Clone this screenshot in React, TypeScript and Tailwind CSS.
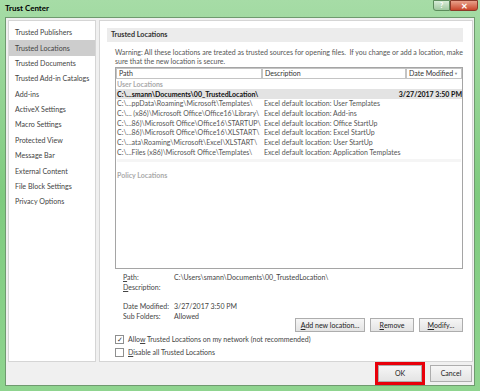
import React from "react";

const sideItems = [
  "Trusted Publishers",
  "Trusted Locations",
  "Trusted Documents",
  "Trusted Add-in Catalogs",
  "Add-ins",
  "ActiveX Settings",
  "Macro Settings",
  "Protected View",
  "Message Bar",
  "External Content",
  "File Block Settings",
  "Privacy Options",
];

const rows = [
  ["C:\\...ppData\\Roaming\\Microsoft\\Templates\\", "Excel default location: User Templates"],
  ["C:\\... (x86)\\Microsoft Office\\Office16\\Library\\", "Excel default location: Add-ins"],
  ["C:\\...86)\\Microsoft Office\\Office16\\STARTUP\\", "Excel default location: Office StartUp"],
  ["C:\\...86)\\Microsoft Office\\Office16\\XLSTART\\", "Excel default location: Excel StartUp"],
  ["C:\\...ata\\Roaming\\Microsoft\\Excel\\XLSTART\\", "Excel default location: User StartUp"],
  ["C:\\...Files (x86)\\Microsoft Office\\Templates\\", "Excel default location: Application Templates"],
];

const Btn = ({ children, className = "" }: { children: React.ReactNode; className?: string }) => (
  <div
    className={`h-[14px] flex items-center justify-center border border-[#adadad] bg-gradient-to-b from-[#f6f6f6] to-[#e4e4e4] text-[#222] whitespace-nowrap ${className}`}
  >
    {children}
  </div>
);

export default function App() {
  return (
    <div
      className="w-[480px] h-[391px] overflow-hidden flex flex-col bg-gradient-to-b from-[#a6dca6] via-[#7fcb7f] to-[#8fd48f] text-[7px] leading-none text-[#333] whitespace-nowrap"
      style={{ fontFamily: 'Lato, "Noto Sans", sans-serif' }}
    >
      {/* title bar */}
      <div className="h-[17px] flex items-start shrink-0">
        <div className="pl-[5px] pt-[4px] text-[8px] font-bold text-black">Trust Center</div>
        <div className="ml-auto mr-[2px] flex">
          <div className="w-[17px] h-[11px] border border-[#5c8c5c] rounded-bl-[3px] bg-gradient-to-b from-[#d8ecd8] to-[#9fc89f] text-[7px] font-bold text-white flex items-center justify-center">
            ?
          </div>
          <div className="w-[28px] h-[11px] border border-[#8a3a2a] rounded-br-[3px] bg-gradient-to-b from-[#e8a08a] to-[#c8442a] text-[8px] font-bold text-white flex items-center justify-center">
            ✕
          </div>
        </div>
      </div>

      {/* client area */}
      <div className="mx-[5px] h-[369px] bg-[#f0f0f0] border border-[#6f9a6f] flex flex-col">
        <div className="flex gap-[3px] pl-[2px] pr-[1px] pt-[2px] h-[348px]">
          {/* sidebar */}
          <div className="w-[88px] shrink-0 h-full bg-white border border-[#d5d5d5] pt-[4px] overflow-hidden">
            {sideItems.map((s) => (
              <div
                key={s}
                className={`h-[15.4px] flex items-center pl-[6px] text-[7.1px] text-[#444] ${
                  s === "Trusted Locations" ? "bg-[#cdcdcd] text-[#222]" : ""
                }`}
              >
                {s}
              </div>
            ))}
          </div>

          {/* main panel */}
          <div className="flex-1 min-w-0 h-full bg-white border border-[#d5d5d5] pl-[7px] pr-[9px] pt-[7px] flex flex-col overflow-hidden">
            <div className="h-[14px] bg-[#ececec] flex items-center pl-[4px] font-bold text-[7.2px] text-[#333]">
              Trusted Locations
            </div>
            <div className="pl-[8px] pt-[6px] text-[#555] leading-[9px]">
              <div>Warning: All these locations are treated as trusted sources for opening files.&nbsp; If you change or add a location, make</div>
              <div>sure that the new location is secure.</div>
            </div>

            {/* table */}
            <div className="ml-[8px] mt-[1px] h-[202px] border border-[#a5a5a5] flex flex-col overflow-hidden">
              <div className="flex h-[11px] text-[#333]">
                <div className="w-[146px] border border-[#c4c4c4] pl-[2px] flex items-center">Path</div>
                <div className="w-[144px] border border-[#c4c4c4] pl-[2px] flex items-center">Description</div>
                <div className="flex-1 border border-[#c4c4c4] pl-[2px] flex items-center justify-between pr-[3px]">
                  <span>Date Modified</span>
                  <span className="text-[4px] text-[#888]">▼</span>
                </div>
              </div>
              <div className="h-[9px] mt-[1px] pl-[1px] flex items-center text-[#aaa] font-bold">User Locations</div>
              <div className="h-[10px] bg-[#e3e3e3] flex items-center text-[#111] font-bold">
                <div className="w-[291px] pl-[1px]">C:\...smann\Documents\00_TrustedLocation\</div>
                <div className="pl-[1px]">3/27/2017 3:50 PM</div>
              </div>
              {rows.map(([p, d]) => (
                <div key={p} className="h-[9.7px] flex items-center text-[#555]">
                  <div className="w-[146px] pl-[1px]">{p}</div>
                  <div className="pl-[2px]">{d}</div>
                </div>
              ))}
              <div className="h-[3px] mt-[2px] mx-[1px] bg-[#f5f5f5]" />
              <div className="h-[9px] mt-[9px] pl-[1px] flex items-center text-[#aaa] font-bold">Policy Locations</div>
            </div>

            {/* details */}
            <div className="pl-[16px] pt-[3px] text-[#444]">
              <div className="flex h-[10px] items-center">
                <div className="w-[51px]"><u>P</u>ath:</div>
                <div>C:\Users\smann\Documents\00_TrustedLocation\</div>
              </div>
              <div className="flex h-[10px] items-center">
                <div className="w-[51px]"><u>D</u>escription:</div>
              </div>
              <div className="flex h-[10px] items-center mt-[9px]">
                <div className="w-[51px]">Date Modified:</div>
                <div>3/27/2017 3:50 PM</div>
              </div>
              <div className="flex h-[10px] items-center">
                <div className="w-[51px]">Sub Folders:</div>
                <div>Allowed</div>
              </div>
            </div>

            <div className="flex justify-end gap-[5px] mt-[-3px]">
              <Btn className="w-[70px]"><u>A</u>dd new location...</Btn>
              <Btn className="w-[44px]"><u>R</u>emove</Btn>
              <Btn className="w-[44px]"><u>M</u>odify...</Btn>
            </div>

            <div className="pl-[8px] mt-[1px] text-[#444]">
              <div className="flex items-center h-[13px] gap-[4px]">
                <div className="w-[9px] h-[9px] border border-[#8e8f8f] bg-white flex items-center justify-center text-[7px] text-[#333]">✓</div>
                <div>Allo<u>w</u> Trusted Locations on my network (not recommended)</div>
              </div>
              <div className="flex items-center h-[13px] gap-[4px]">
                <div className="w-[9px] h-[9px] border border-[#8e8f8f] bg-white" />
                <div><u>D</u>isable all Trusted Locations</div>
              </div>
            </div>
          </div>
        </div>

        {/* bottom bar */}
        <div className="flex-1 flex items-center justify-end gap-[5px] pr-[2px]">
          <div className="border-[3px] border-[#e8000a] p-0">
            <Btn className="w-[44px] h-[17px]">OK</Btn>
          </div>
          <Btn className="w-[42px] h-[17px]">Cancel</Btn>
        </div>
      </div>
    </div>
  );
}
